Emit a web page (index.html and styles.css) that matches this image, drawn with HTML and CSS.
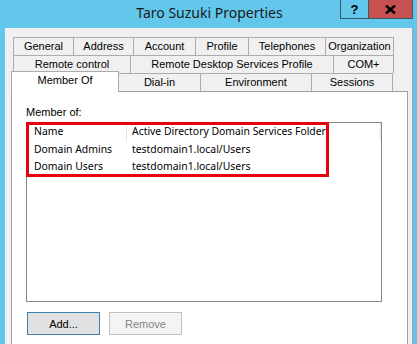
FILE: index.html
```html
<!DOCTYPE html>
<html>
<head>
<meta charset="utf-8">
<link rel="stylesheet" href="styles.css">
</head>
<body>
<div class="window">
  <div class="titlebar">
    <div class="title-spacer"></div>
    <div class="title">Taro Suzuki Properties</div>
    <div class="caption-buttons">
      <div class="cbtn help">?</div>
      <div class="cbtn close">
        <svg width="11" height="9" viewBox="0 0 11 9"><path d="M1 0.5 L10 8.5 M10 0.5 L1 8.5" stroke="#000" stroke-width="2.4" fill="none"/></svg>
      </div>
    </div>
  </div>
  <div class="client">
    <div class="tabs">
      <div class="tab-row">
        <div class="tab w60">General</div>
        <div class="tab w60">Address</div>
        <div class="tab w62">Account</div>
        <div class="tab w53">Profile</div>
        <div class="tab w77">Telephones</div>
        <div class="tab w69 last">Organization</div>
      </div>
      <div class="tab-row">
        <div class="tab w117">Remote control</div>
        <div class="tab w203">Remote Desktop Services Profile</div>
        <div class="tab w61 last">COM+</div>
      </div>
      <div class="tab-row front">
        <div class="tab selected">Member Of</div>
        <div class="tab w82">Dial-in</div>
        <div class="tab w111">Environment</div>
        <div class="tab w82 last">Sessions</div>
      </div>
    </div>
    <div class="panel">
      <div class="label">Member of:</div>
      <div class="listview">
        <div class="lv-header">
          <div class="col c1">Name</div>
          <div class="col c2">Active Directory Domain Services Folder</div>
        </div>
        <div class="lv-row">
          <div class="col c1">Domain Admins</div>
          <div class="col c2">testdomain1.local/Users</div>
        </div>
        <div class="lv-row">
          <div class="col c1">Domain Users</div>
          <div class="col c2">testdomain1.local/Users</div>
        </div>
        <div class="highlight"></div>
      </div>
      <div class="buttons">
        <div class="btn default">Add...</div>
        <div class="btn disabled">Remove</div>
      </div>
    </div>
  </div>
</div>
</body>
</html>
```

FILE: styles.css
```css
html, body {
  margin: 0;
  padding: 0;
  background: #62c7ea;
  overflow: hidden;
}
.window {
  width: 417px;
  height: 344px;
  display: flex;
  flex-direction: column;
}
.titlebar {
  height: 28px;
  display: grid;
  grid-template-columns: 1fr auto 1fr;
  align-items: start;
}
.title {
  font-family: "Noto Sans", sans-serif;
  font-size: 14px;
  color: #1a1a1a;
  line-height: 16px;
  padding-top: 5px;
  padding-left: 2px;
  white-space: nowrap;
}
.caption-buttons {
  justify-self: end;
  display: flex;
  margin-right: 4px;
}
.cbtn {
  box-sizing: border-box;
  height: 19px;
  border: 1px solid #3d5a66;
  border-top: none;
  display: flex;
  align-items: center;
  justify-content: center;
}
.help {
  width: 29px;
  font-family: "Liberation Sans", sans-serif;
  font-weight: bold;
  font-size: 13px;
  color: #000;
}
.close {
  width: 44px;
  background: #c75050;
  border-left: none;
}
.client {
  flex: 1;
  margin: 0 4px 0 5px;
  background: #f0f0f0;
  padding: 9px 0 0 6px;
  display: flex;
  flex-direction: column;
  border-right: 1px solid #9aa3a8;
}
.tabs {
  display: flex;
  flex-direction: column;
  font-family: "Liberation Sans", sans-serif;
  font-size: 11px;
  color: #000;
}
.tab-row {
  display: flex;
  padding-left: 2px;
  height: 18px;
}
.tab {
  box-sizing: border-box;
  height: 18px;
  border-top: 1px solid #acacac;
  border-left: 1px solid #acacac;
  background: #f0f0f0;
  text-align: center;
  line-height: 17px;
  white-space: nowrap;
}
.tab.last { border-right: 1px solid #acacac; }
.tab.selected {
  position: relative;
  z-index: 2;
  width: 108px;
  height: 21px;
  margin-left: -2px;
  margin-top: -2px;
  background: #fff;
  border-right: 1px solid #acacac;
  line-height: 17px;
  margin-right: -1px;
}
.w53 { width: 53px; }
.w60 { width: 60px; }
.w61 { width: 61px; }
.w62 { width: 62px; }
.w69 { width: 69px; }
.w77 { width: 77px; }
.w82 { width: 82px; }
.w111 { width: 111px; }
.w117 { width: 117px; }
.w203 { width: 203px; }
.panel {
  flex: 1;
  width: 397px;
  box-sizing: border-box;
  background: #fff;
  border: 1px solid #a0a0a0;
  border-bottom: none;
  padding: 14px 0 0 14px;
  position: relative;
  z-index: 1;
}
.label {
  font-family: "Liberation Sans", sans-serif;
  font-size: 11px;
  line-height: 13px;
  height: 16px;
  color: #000;
}
.listview {
  position: relative;
  width: 356px;
  height: 180px;
  box-sizing: border-box;
  border: 1px solid #828790;
  font-family: "Noto Sans", sans-serif;
  font-size: 10.4px;
  color: #000;
}
.lv-header, .lv-row {
  display: flex;
  height: 17px;
  line-height: 17px;
}
.lv-header { height: 18px; }
.col { white-space: nowrap; box-sizing: border-box; }
.c1 { width: 100px; padding-left: 7px; }
.c2 { width: 254px; padding-left: 5px; }
.lv-header .c1 { border-right: 1px solid #e5e5e5; }
.lv-header .c2 { border-right: 1px solid #e5e5e5; }
.highlight {
  position: absolute;
  left: -1px;
  top: -1px;
  width: 303px;
  height: 55px;
  box-sizing: border-box;
  border: 3px solid #e8000c;
}
.buttons {
  display: flex;
  gap: 9px;
  margin-top: 10px;
  padding-left: 1px;
}
.btn {
  box-sizing: border-box;
  width: 73px;
  height: 23px;
  font-family: "Liberation Sans", sans-serif;
  font-size: 11px;
  display: flex;
  align-items: center;
  justify-content: center;
}
.btn.default {
  background: #e1e1e1;
  border: 1px solid #3c7fb1;
  color: #000;
}
.btn.disabled {
  background: #f4f4f4;
  border: 1px solid #bfbfbf;
  color: #838383;
}
```
